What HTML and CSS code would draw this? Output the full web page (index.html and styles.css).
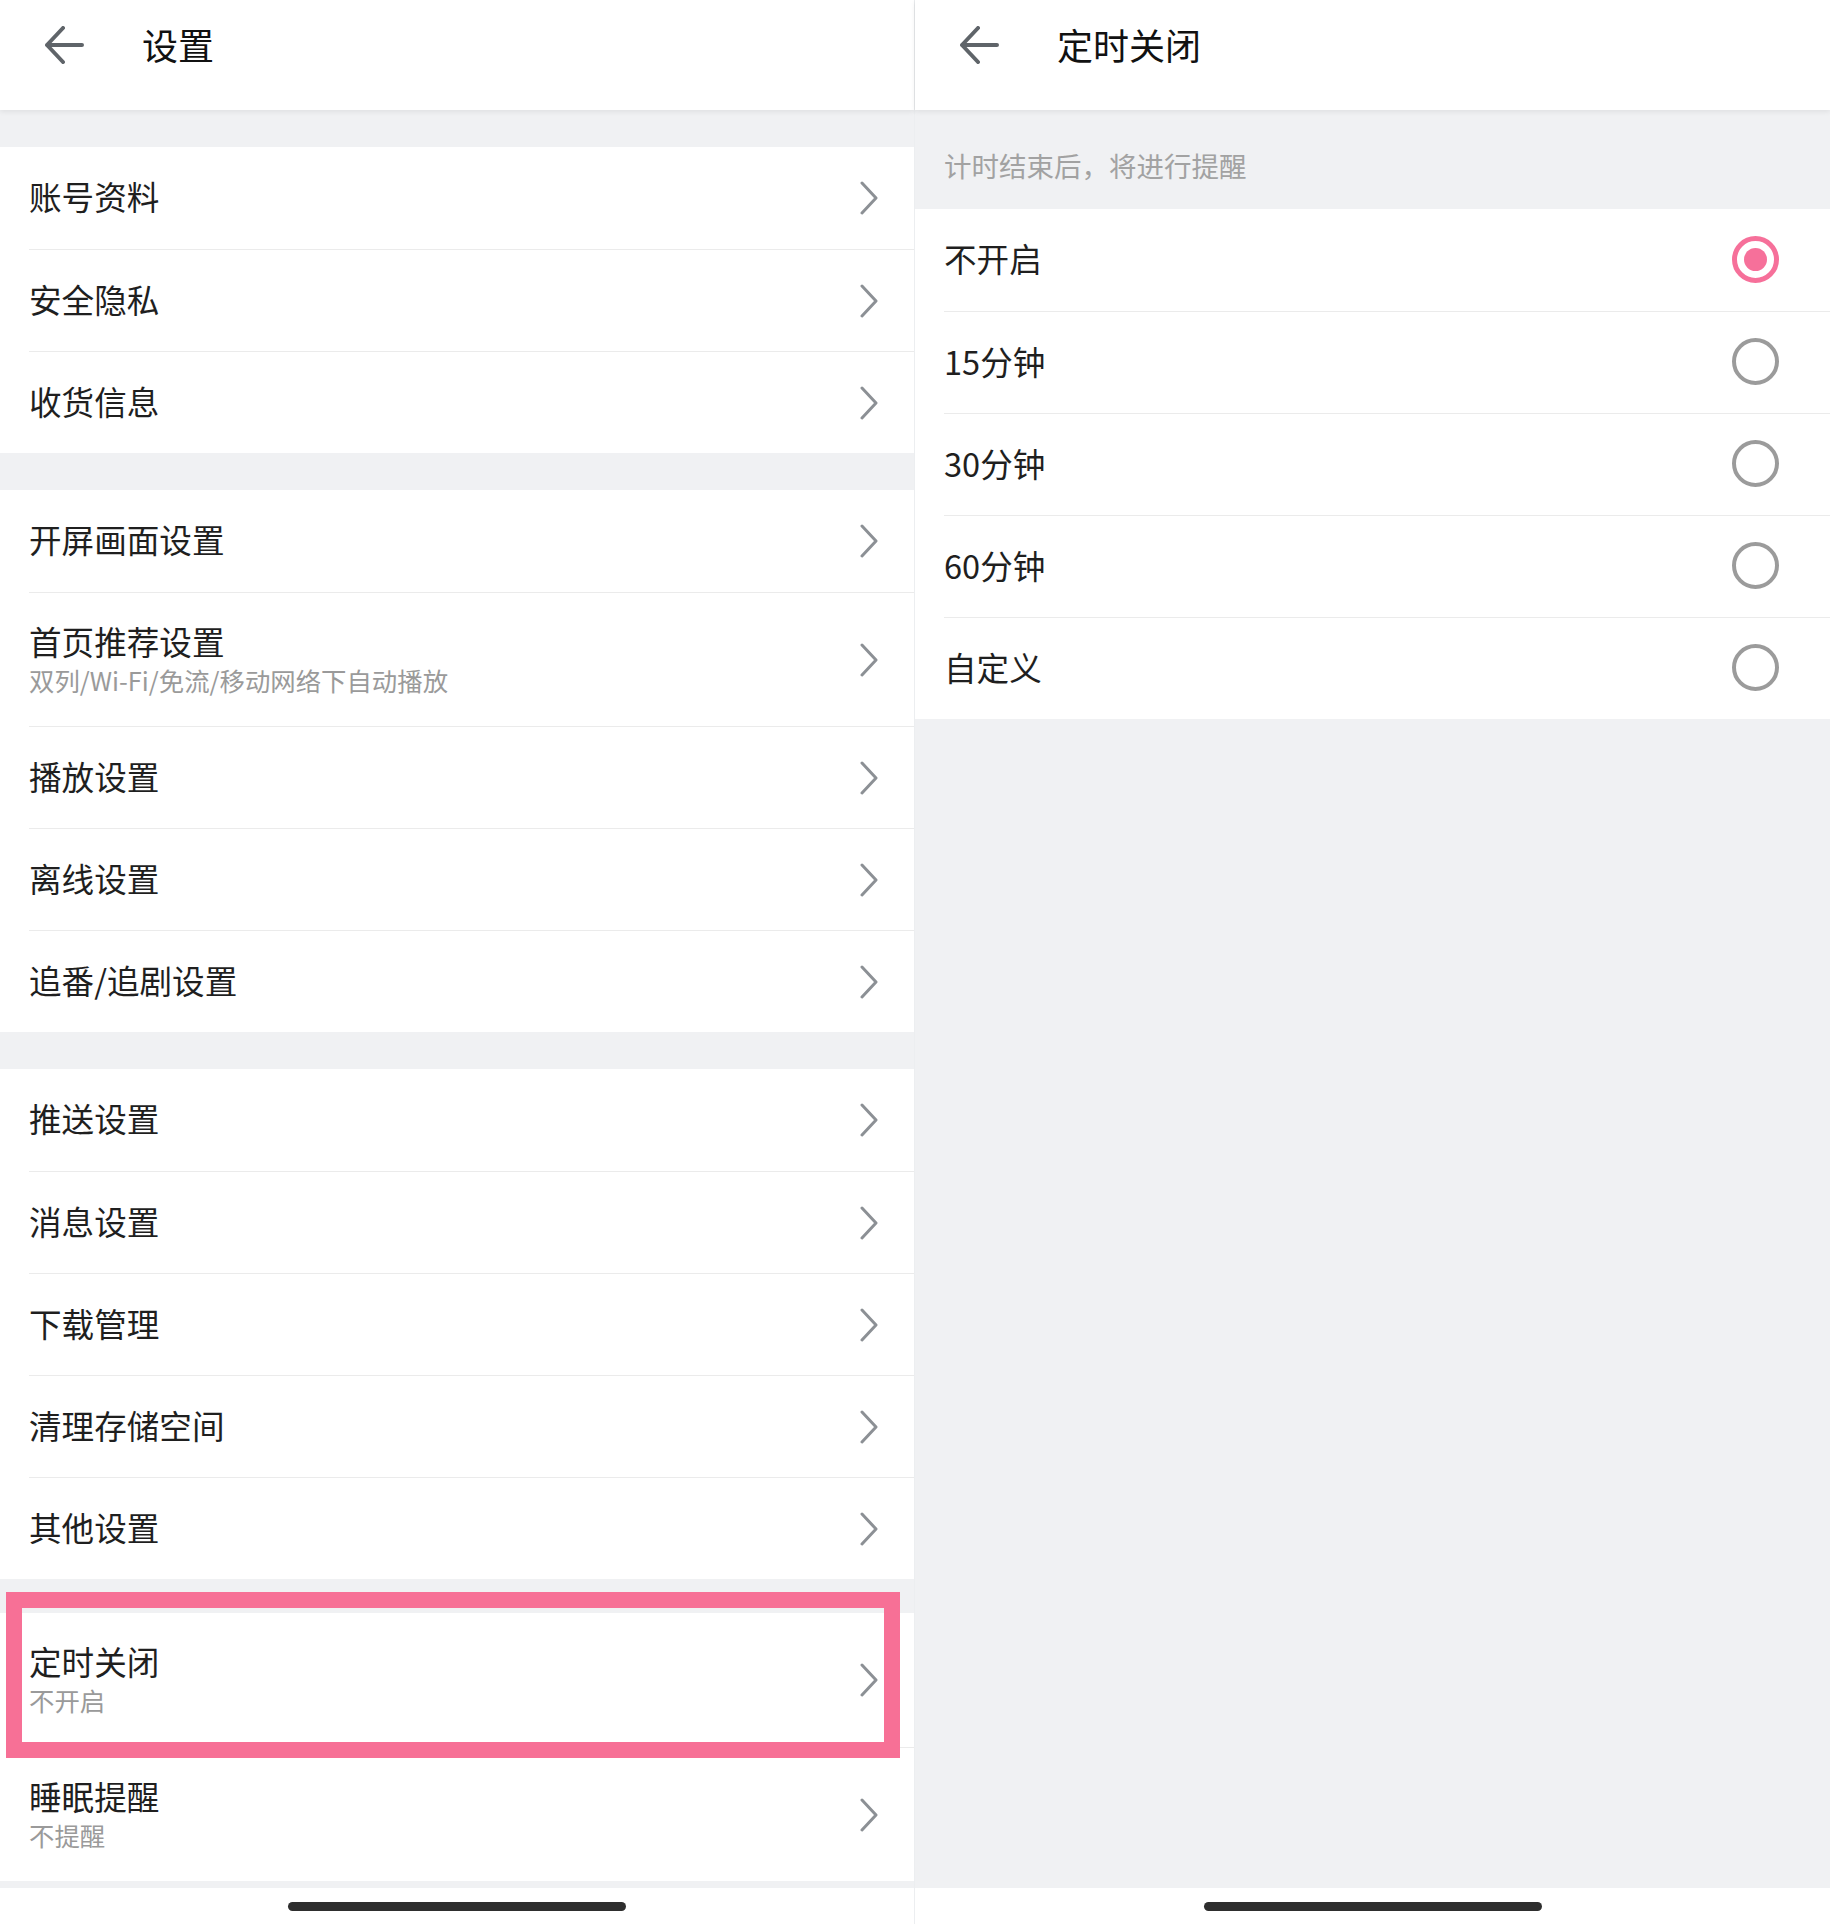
FILE: index.html
```html
<!DOCTYPE html>
<html lang="zh-CN">
<head>
  <meta charset="UTF-8" />
  <meta name="viewport" content="width=device-width, initial-scale=1.0"/>
  <title>设置 / 定时关闭</title>
  <link rel="stylesheet" href="styles.css">
</head>
<body>
  <div class="screens">

    <!-- 设置 -->
    <div class="panel panel-left">
      <header class="topbar">
        <svg class="back" width="39" height="38" viewBox="0 0 39 38"><path d="M18 2 L2 19 L18 36 M2 19 H37" /></svg>
        <h1>设置</h1>
      </header>

      <div class="content content-left">
        <div class="group">
          <div class="row"><div class="row-body"><div class="row-text"><div class="row-title">账号资料</div></div><svg class="chevron" viewBox="0 0 20 34"><polyline points="3,2 17,17 3,32" /></svg></div></div>
          <div class="row"><div class="row-body"><div class="row-text"><div class="row-title">安全隐私</div></div><svg class="chevron" viewBox="0 0 20 34"><polyline points="3,2 17,17 3,32" /></svg></div></div>
          <div class="row"><div class="row-body"><div class="row-text"><div class="row-title">收货信息</div></div><svg class="chevron" viewBox="0 0 20 34"><polyline points="3,2 17,17 3,32" /></svg></div></div>
        </div>

        <div class="group">
          <div class="row"><div class="row-body"><div class="row-text"><div class="row-title">开屏画面设置</div></div><svg class="chevron" viewBox="0 0 20 34"><polyline points="3,2 17,17 3,32" /></svg></div></div>
          <div class="row tall"><div class="row-body"><div class="row-text"><div class="row-title">首页推荐设置</div><div class="row-sub">双列/Wi-Fi/免流/移动网络下自动播放</div></div><svg class="chevron" viewBox="0 0 20 34"><polyline points="3,2 17,17 3,32" /></svg></div></div>
          <div class="row"><div class="row-body"><div class="row-text"><div class="row-title">播放设置</div></div><svg class="chevron" viewBox="0 0 20 34"><polyline points="3,2 17,17 3,32" /></svg></div></div>
          <div class="row"><div class="row-body"><div class="row-text"><div class="row-title">离线设置</div></div><svg class="chevron" viewBox="0 0 20 34"><polyline points="3,2 17,17 3,32" /></svg></div></div>
          <div class="row"><div class="row-body"><div class="row-text"><div class="row-title">追番/追剧设置</div></div><svg class="chevron" viewBox="0 0 20 34"><polyline points="3,2 17,17 3,32" /></svg></div></div>
        </div>

        <div class="group">
          <div class="row"><div class="row-body"><div class="row-text"><div class="row-title">推送设置</div></div><svg class="chevron" viewBox="0 0 20 34"><polyline points="3,2 17,17 3,32" /></svg></div></div>
          <div class="row"><div class="row-body"><div class="row-text"><div class="row-title">消息设置</div></div><svg class="chevron" viewBox="0 0 20 34"><polyline points="3,2 17,17 3,32" /></svg></div></div>
          <div class="row"><div class="row-body"><div class="row-text"><div class="row-title">下载管理</div></div><svg class="chevron" viewBox="0 0 20 34"><polyline points="3,2 17,17 3,32" /></svg></div></div>
          <div class="row"><div class="row-body"><div class="row-text"><div class="row-title">清理存储空间</div></div><svg class="chevron" viewBox="0 0 20 34"><polyline points="3,2 17,17 3,32" /></svg></div></div>
          <div class="row"><div class="row-body"><div class="row-text"><div class="row-title">其他设置</div></div><svg class="chevron" viewBox="0 0 20 34"><polyline points="3,2 17,17 3,32" /></svg></div></div>
        </div>

        <div class="group group-last">
          <div class="row tall"><div class="row-body"><div class="row-text"><div class="row-title">定时关闭</div><div class="row-sub">不开启</div></div><svg class="chevron" viewBox="0 0 20 34"><polyline points="3,2 17,17 3,32" /></svg></div></div>
          <div class="row tall"><div class="row-body"><div class="row-text"><div class="row-title">睡眠提醒</div><div class="row-sub">不提醒</div></div><svg class="chevron" viewBox="0 0 20 34"><polyline points="3,2 17,17 3,32" /></svg></div></div>
        </div>
      </div>

      <div class="homebar"><span></span></div>

      <!-- 标注框 -->
      <div class="highlight"></div>
    </div>

    <!-- 定时关闭 -->
    <div class="panel panel-right">
      <header class="topbar">
        <svg class="back" width="39" height="38" viewBox="0 0 39 38"><path d="M18 2 L2 19 L18 36 M2 19 H37" /></svg>
        <h1>定时关闭</h1>
      </header>

      <div class="content">
        <div class="notice">计时结束后，将进行提醒</div>
        <div class="options">
          <div class="option"><div class="option-body"><span class="option-label">不开启</span><span class="radio on"></span></div></div>
          <div class="option"><div class="option-body"><span class="option-label">15分钟</span><span class="radio"></span></div></div>
          <div class="option"><div class="option-body"><span class="option-label">30分钟</span><span class="radio"></span></div></div>
          <div class="option"><div class="option-body"><span class="option-label">60分钟</span><span class="radio"></span></div></div>
          <div class="option"><div class="option-body"><span class="option-label">自定义</span><span class="radio"></span></div></div>
        </div>
      </div>

      <div class="homebar"><span></span></div>
    </div>

  </div>
</body>
</html>
```

FILE: styles.css
```css
* {
  box-sizing: border-box;
}

body {
  margin: 0;
  font-family: "Noto Sans CJK SC", "Noto Sans", sans-serif;
  color: #1f1f1f;
  background: #fff;
}

.screens {
  display: flex;
  width: 1830px;
  height: 1924px;
}

.panel {
  position: relative;
  display: flex;
  flex-direction: column;
  height: 1924px;
}

.panel-left {
  width: 915px;
  border-right: 1px solid #eceef0;
}

.panel-right {
  flex: 1;
}

/* top bar */
.topbar {
  position: relative;
  z-index: 1;
  height: 110px;
  display: flex;
  align-items: center;
  padding: 0 0 20px 45px;
  background: #fff;
  box-shadow: 0 2px 5px rgba(0,0,0,0.07);
}

.back {
  fill: none;
  stroke: #5f6469;
  stroke-width: 4;
  stroke-linecap: round;
  stroke-linejoin: round;
}

.topbar h1 {
  margin: 0 0 0 58px;
  padding-bottom: 3px;
  font-size: 36px;
  font-weight: 400;
  color: #111;
}

.content {
  flex: 1;
  background: #f0f1f3;
}

.content-left {
  padding-bottom: 7px;
}

/* setting rows */
.group {
  margin-top: 37px;
  background: #fff;
}

.group-last {
  margin-top: 34px;
}

.row {
  display: flex;
  height: 102px;
  padding-left: 29px;
}

.row.tall {
  height: 134px;
}

.row-body {
  flex: 1;
  display: flex;
  align-items: center;
  padding-right: 35px;
  border-top: 1px solid #ebebeb;
}

.row:first-child .row-body {
  border-top: none;
}

.row-text {
  flex: 1;
  padding-bottom: 4px;
}

.row-title {
  font-size: 32.6px;
  line-height: 44px;
}

.row-sub {
  font-size: 25.4px;
  line-height: 34px;
  color: #9a9a9a;
}

.chevron {
  width: 20px;
  height: 34px;
  fill: none;
  stroke: #8c9095;
  stroke-width: 3;
  stroke-linecap: round;
  stroke-linejoin: round;
}

/* timer options */
.notice {
  height: 99px;
  padding: 36px 0 0 29px;
  font-size: 27.5px;
  line-height: 38px;
  color: #a2a2a2;
}

.options {
  background: #fff;
}

.option {
  display: flex;
  height: 102px;
  padding-left: 29px;
}

.option-body {
  flex: 1;
  display: flex;
  align-items: center;
  padding-right: 51px;
  border-top: 1px solid #ebebeb;
}

.option:first-child .option-body {
  border-top: none;
}

.option-label {
  flex: 1;
  padding-bottom: 4px;
  font-size: 32.6px;
  line-height: 44px;
}

.radio {
  width: 47px;
  height: 47px;
  margin-bottom: 2px;
  border-radius: 50%;
  border: 4px solid #9b9b9b;
}

.radio.on {
  display: flex;
  align-items: center;
  justify-content: center;
  border: 5px solid #f6709a;
}

.radio.on::after {
  content: "";
  width: 23px;
  height: 23px;
  border-radius: 50%;
  background: #f6709a;
}

/* bottom gesture bar */
.homebar {
  height: 36px;
  display: flex;
  justify-content: center;
  padding-top: 14px;
  background: #fff;
}

.homebar span {
  width: 338px;
  height: 9px;
  border-radius: 5px;
  background: #2e2e2e;
}

/* annotation box */
.highlight {
  position: absolute;
  left: 6px;
  top: 1592px;
  width: 894px;
  height: 166px;
  border: 16px solid #f77096;
}
```
